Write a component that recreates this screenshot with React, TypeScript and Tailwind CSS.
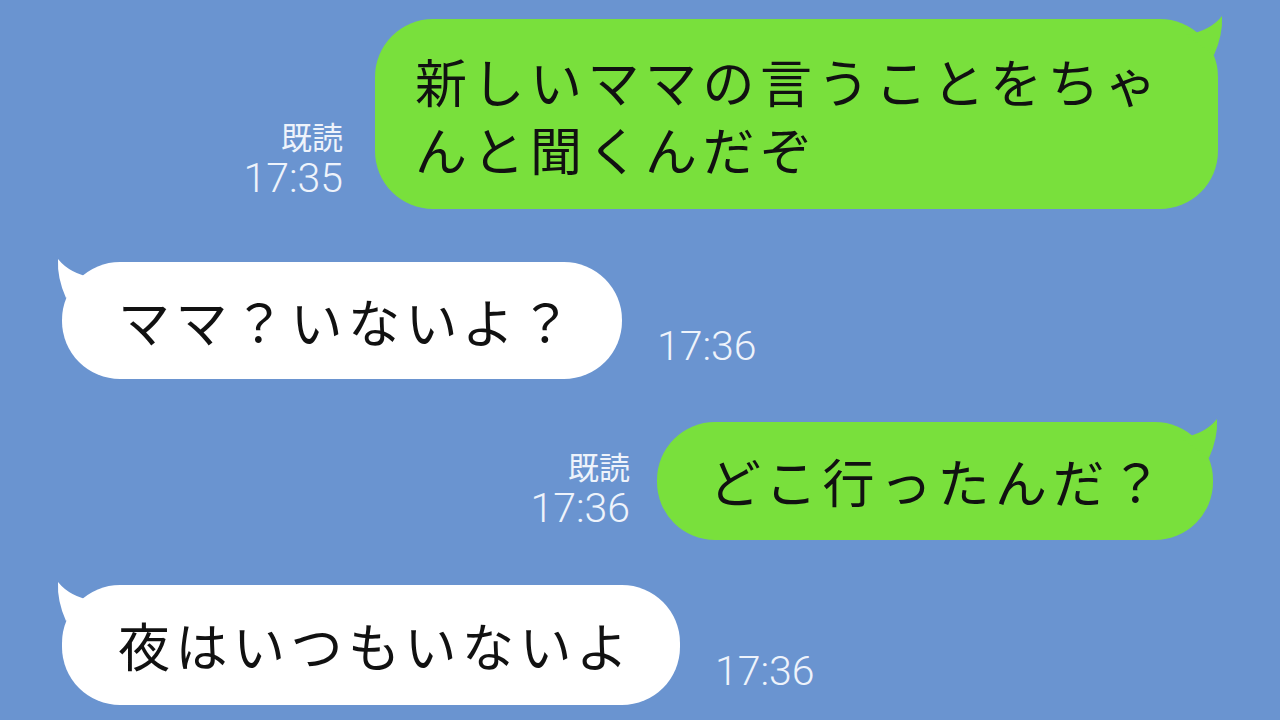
import type { ReactNode } from "react";

const jp = "font-['Noto_Sans_CJK_JP','Noto_Sans',sans-serif]";
const num = "font-['Roboto','Liberation_Sans',sans-serif]";

const Tail = ({ side, color }: { side: "left" | "right"; color: string }) => {
  const d =
    side === "right"
      ? "M3 22 Q27 18 39 3 Q40 22 31 42 Z"
      : "M42 22 Q18 18 6 3 Q5 22 14 42 Z";
  return (
    <svg
      width="45"
      height="50"
      viewBox="0 0 45 50"
      className={side === "right" ? "absolute -right-[10px] -top-[6px]" : "absolute -left-[10px] -top-[6px]"}
    >
      <path d={d} fill={color} />
    </svg>
  );
};

const Bubble = ({
  side,
  className,
  children,
}: {
  side: "left" | "right";
  className: string;
  children: ReactNode;
}) => {
  const green = side === "right";
  return (
    <div
      className={
        "relative flex flex-col justify-center rounded-[58px] text-[52px] leading-[68px] tracking-[5.5px] text-[#111] " +
        (green ? "bg-[#79e03c] " : "bg-white ") +
        className
      }
    >
      <Tail side={side} color={green ? "#79e03c" : "#ffffff"} />
      {children}
    </div>
  );
};

const Stamp = ({ read, time, className }: { read?: boolean; time: string; className: string }) => (
  <div className={"flex flex-col items-end text-[#eef3fb] " + className}>
    {read && <span className={jp + " text-[31px] leading-[36px] mb-[2px]"}>既読</span>}
    <span className={num + " font-light text-[41px] leading-[44px]"}>{time}</span>
  </div>
);

export default function App() {
  return (
    <div className={"w-full h-[720px] overflow-hidden bg-[#6a94d0] px-[62px] flex flex-col " + jp}>
      <div className="mt-[19px] flex justify-end items-end">
        <Stamp read time="17:35" className="mr-[32px] mb-[9px]" />
        <Bubble side="right" className="w-[843px] h-[190px] pl-[40px] pt-[2px]">
          <span>新しいママの言うことをちゃ</span>
          <span>んと聞くんだぞ</span>
        </Bubble>
      </div>

      <div className="mt-[53px] flex items-end">
        <Bubble side="left" className="w-[560px] h-[117px] pl-[56px]">
          <span>ママ？いないよ？</span>
        </Bubble>
        <Stamp time="17:36" className="ml-[35px] mb-[11px]" />
      </div>

      <div className="mt-[43px] flex justify-end items-end pr-[5px]">
        <Stamp read time="17:36" className="mr-[27px] mb-[10px]" />
        <Bubble side="right" className="w-[556px] h-[118px] pl-[52px]">
          <span>どこ行ったんだ？</span>
        </Bubble>
      </div>

      <div className="mt-[45px] flex items-end">
        <Bubble side="left" className="w-[618px] h-[120px] pl-[56px]">
          <span>夜はいつもいないよ</span>
        </Bubble>
        <Stamp time="17:36" className="ml-[35px] mb-[12px]" />
      </div>
    </div>
  );
}
